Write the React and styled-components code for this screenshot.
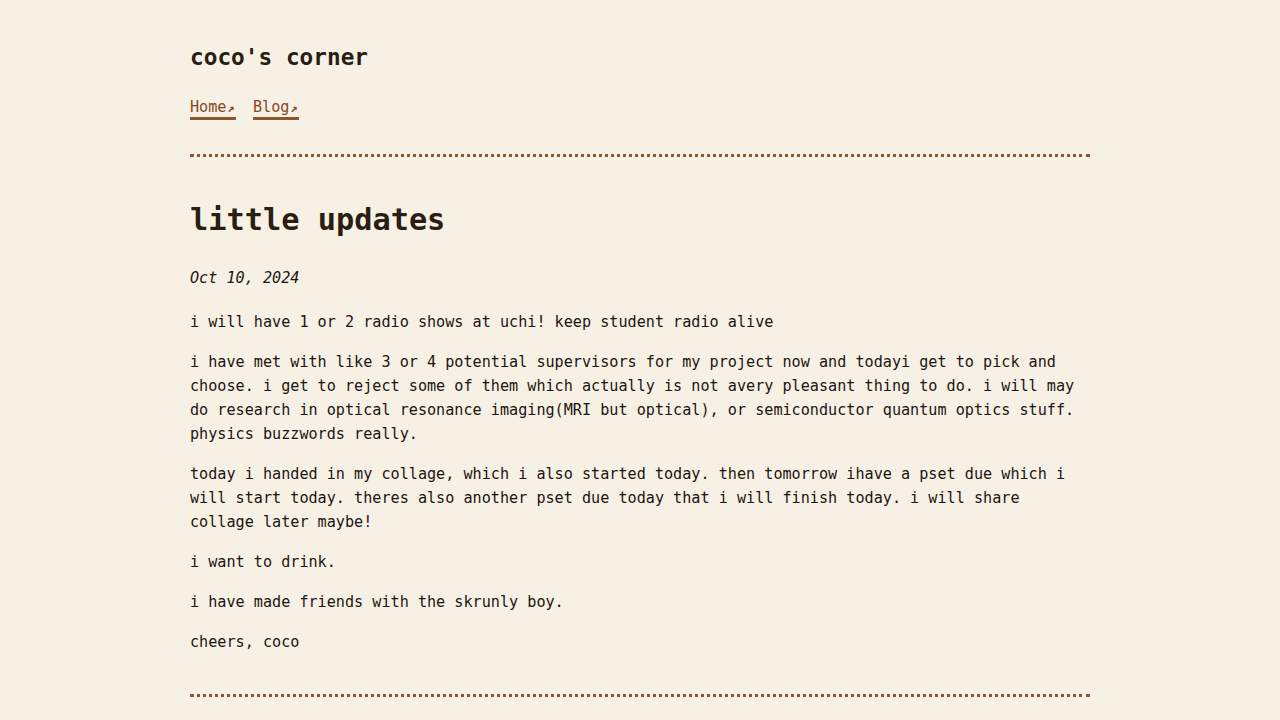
import React from 'react';
import styled, { createGlobalStyle } from 'styled-components';

const GlobalStyle = createGlobalStyle`
  html, body {
    margin: 0;
    padding: 0;
    background: #f7f0e5;
  }
  body {
    font-family: "DejaVu Sans Mono", "Liberation Mono", monospace;
    font-size: 15.15px;
    color: #1c1510;
  }
`

const Page = styled.div`
    max-width: 900px;
    margin: 0 auto;
    padding-top: 44px;
`
const Header = styled.header`
    padding-bottom: 34px;
    border-bottom: 3px dotted #8b5632;
`
const SiteTitle = styled.h1`
    margin: 0;
    font-size: 22.75px;
    line-height: 1.2;
    font-weight: 700;
    color: #2b1d12;
`
const Nav = styled.nav`
    display: flex;
    gap: 17px;
    margin-top: 27px;
`
const NavLink = styled.a`
    display: inline-block;
    line-height: 18px;
    color: #84491f;
    text-decoration: none;
    border-bottom: 3px solid #8b5632;
    cursor: pointer;

    &::after {
        content: "↗";
        display: inline-block;
        width: 9.5px;
        font-size: 12px;
        font-weight: 700;
        text-align: center;
        vertical-align: 0;
    }
`
const Article = styled.article`
    padding-bottom: 40px;
    border-bottom: 3px dotted #8b5632;
`
const PostTitle = styled.h2`
    margin: 45px 0 0;
    font-size: 30.3px;
    line-height: 1.2;
    font-weight: 700;
    color: #2b1d12;
`
const PostDate = styled.p`
    margin: 27px 0 20px;
    line-height: 24px;
    font-style: italic;
`
const Para = styled.p`
    margin: 16px 0 0;
    line-height: 24px;

    ${PostDate} + & {
        margin-top: 0;
    }
`

const paragraphs = [
    'i will have 1 or 2 radio shows at uchi! keep student radio alive',
    'i have met with like 3 or 4 potential supervisors for my project now and todayi get to pick and choose. i get to reject some of them which actually is not avery pleasant thing to do. i will may do research in optical resonance imaging(MRI but optical), or semiconductor quantum optics stuff. physics buzzwords really.',
    'today i handed in my collage, which i also started today. then tomorrow ihave a pset due which i will start today. theres also another pset due today that i will finish today. i will share collage later maybe!',
    'i want to drink.',
    'i have made friends with the skrunly boy.',
    'cheers, coco',
];

const App = () => {
    return (
        <>
            <GlobalStyle />
            <Page>
                <Header>
                    <SiteTitle>coco's corner</SiteTitle>
                    <Nav>
                        <NavLink>Home</NavLink>
                        <NavLink>Blog</NavLink>
                    </Nav>
                </Header>
                <Article>
                    <PostTitle>little updates</PostTitle>
                    <PostDate>Oct 10, 2024</PostDate>
                    {paragraphs.map((text, i) => (
                        <Para key={i}>{text}</Para>
                    ))}
                </Article>
            </Page>
        </>
    );
};

export default App;
